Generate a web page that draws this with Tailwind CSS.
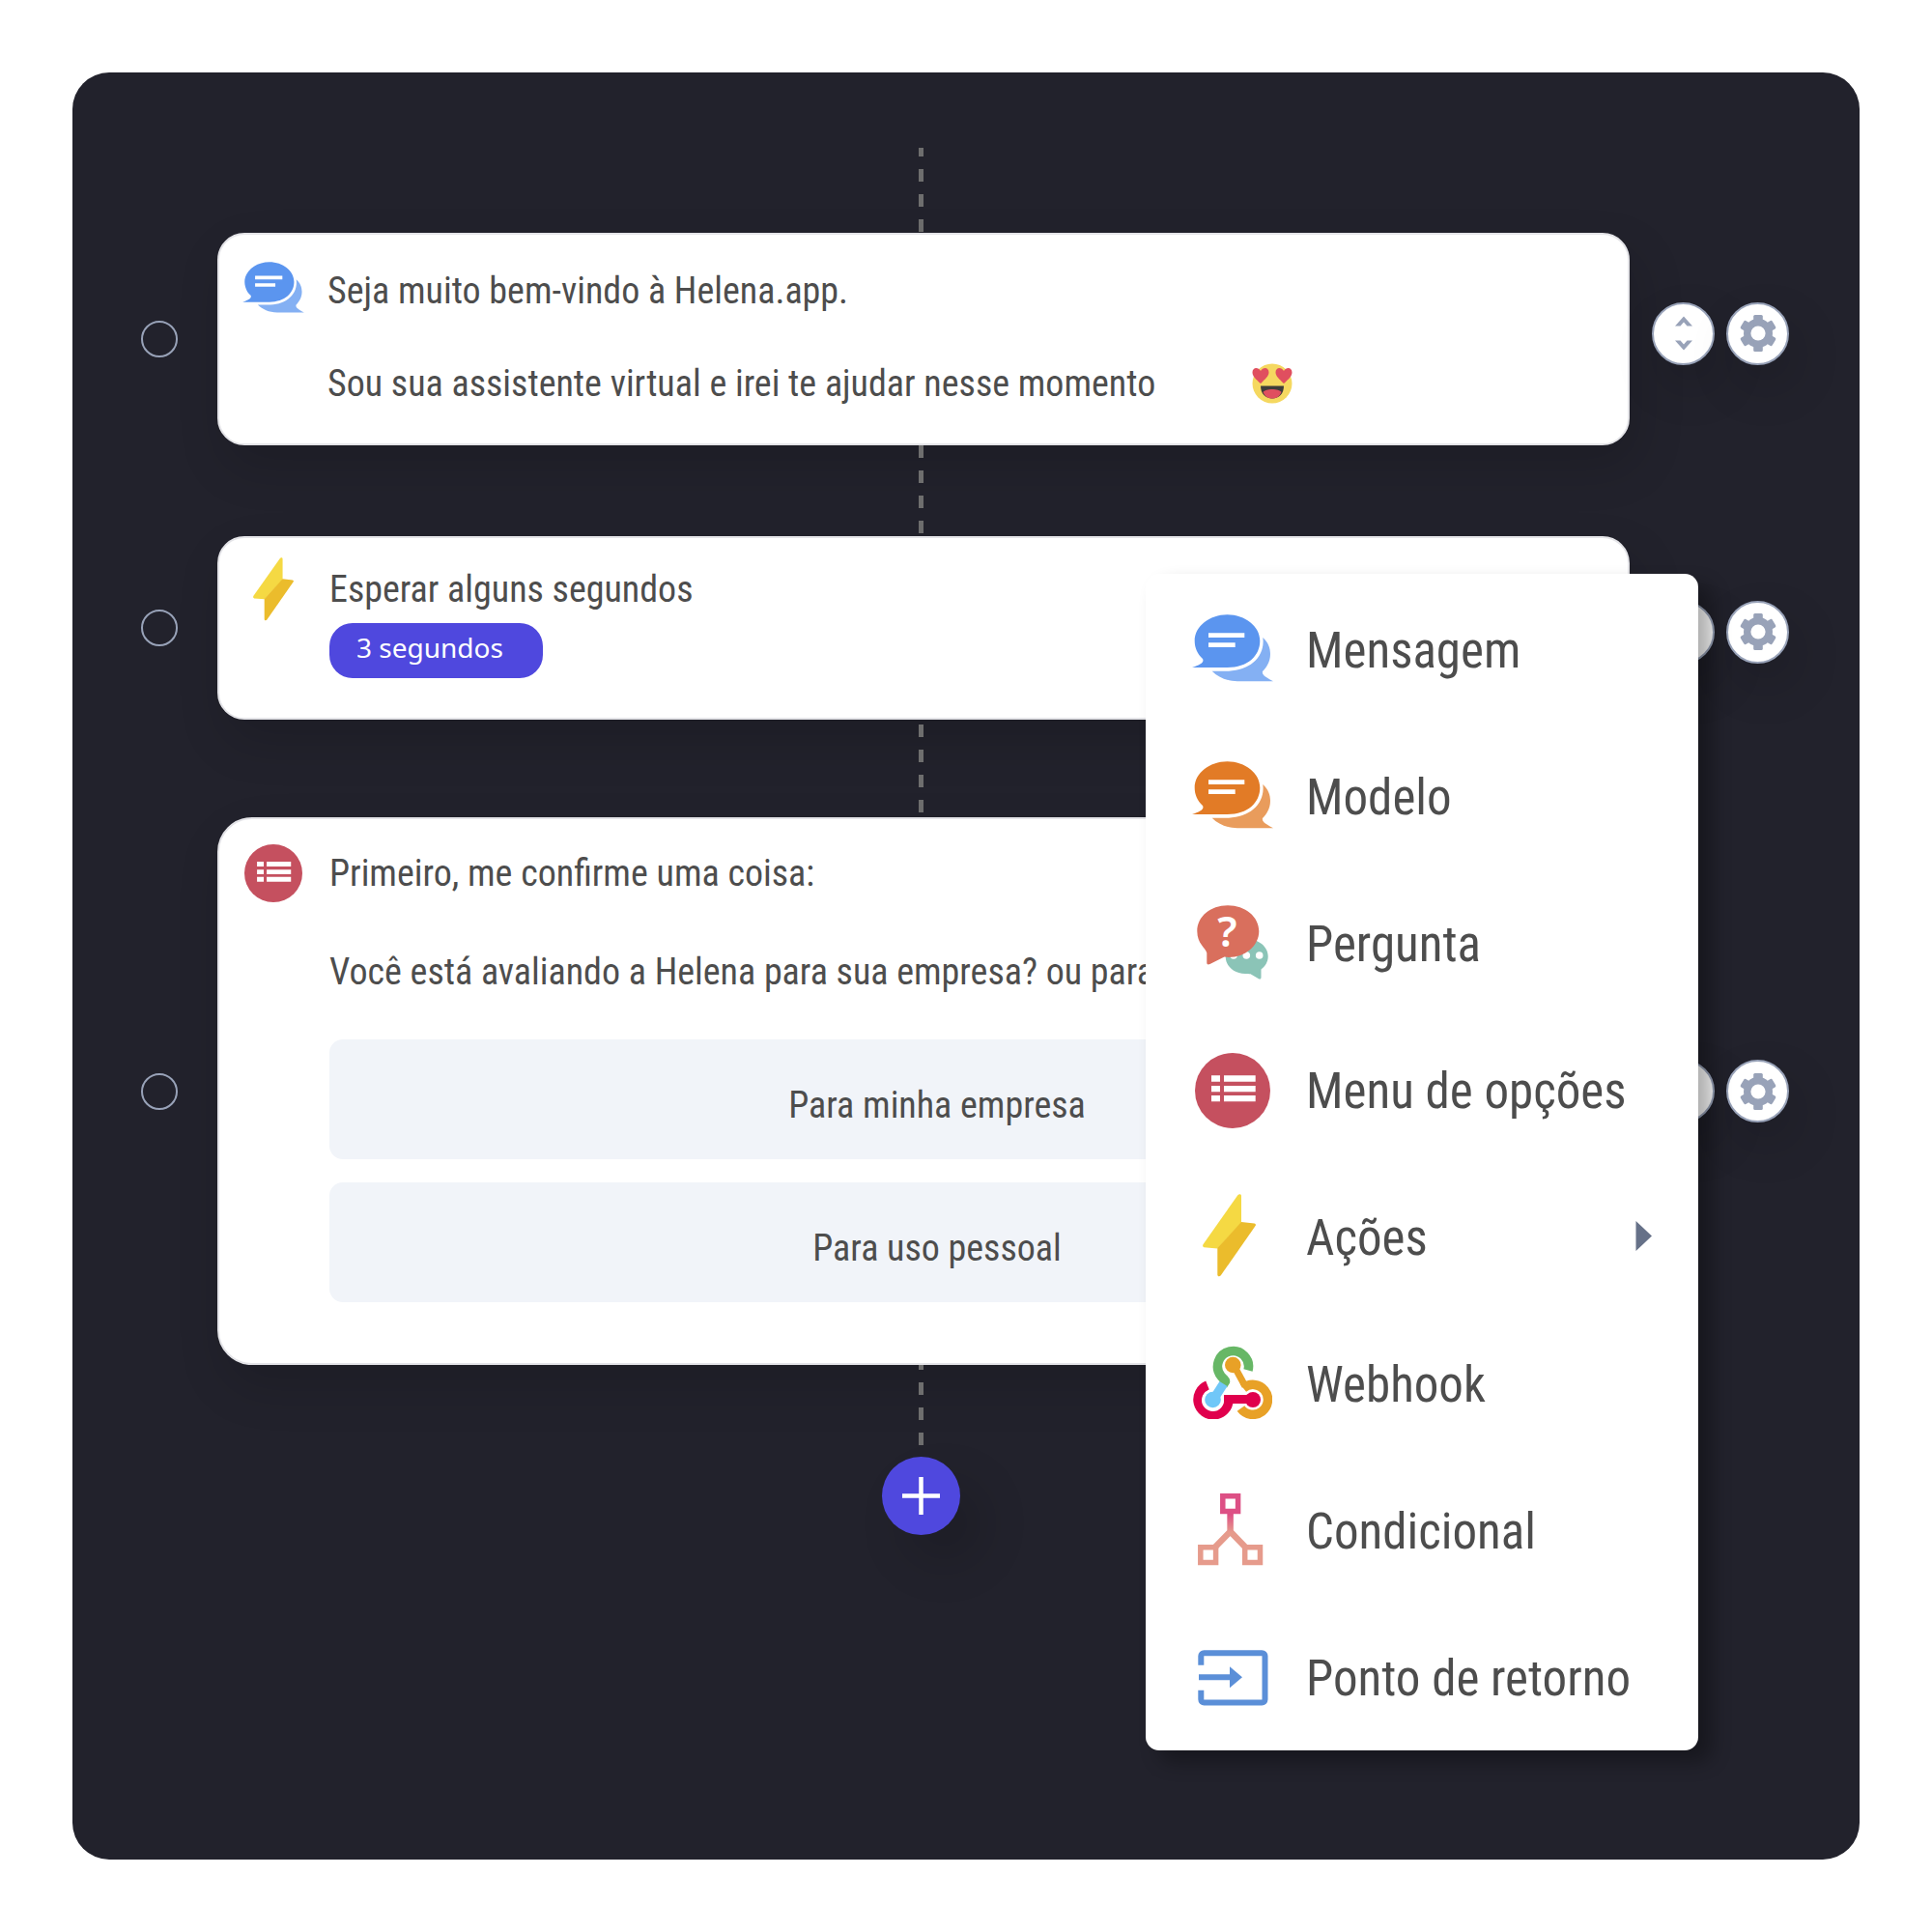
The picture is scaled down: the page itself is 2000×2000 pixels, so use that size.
<!DOCTYPE html>
<html lang="pt-BR">
<head>
<meta charset="utf-8">
<meta name="viewport" content="width=device-width, initial-scale=1">
<title>Helena.app – Fluxo do chatbot</title>
<script src="https://cdn.jsdelivr.net/npm/@tailwindcss/browser@4"></script>
</head>
<body class="flex min-h-screen bg-white p-[75px] font-['Roboto_Condensed','Liberation_Sans',sans-serif] text-[#4d4d4d]">

<svg class="hidden" aria-hidden="true">
  <symbol id="chat" viewBox="0 0 84 70">
    <path fill="currentColor" opacity=".75" d="M73.3 24C79 29 81 35 81 41C81 49 77 55 73 59C72 63 77 65 84 69.3H47C36 69 27 65 20.7 58.7H38C60 58 76 44 73.3 24Z"/>
    <path fill="currentColor" d="M36.5 .3C55 .3 70.3 12.5 70.3 27.5S58 55 36.5 55H0C8 52 13 50 11 46C5.500 41 2.700 34.500 2.700 27.500C2.700 12.500 18 .3 36.500 .3Z"/>
    <path fill="#fff" d="M17 19.300h37.300v4.700H17zM17 29.300h27.700v4.700H17z"/>
  </symbol>
  <symbol id="bolt" viewBox="0 0 55 86">
    <path fill="#f5d943" d="M36.500 1C38 -.3 40 0 40 2V30L15.300 56.500L1.500 55.300C0 55 -.3 53.500 .6 52Z"/>
    <path fill="#ebbc2c" d="M40 29L53.500 30.400C55 30.700 55.300 32 54.400 33.300L18.800 84.300C17.500 86 15.300 85.500 15.300 83.500V56Z"/>
  </symbol>
  <symbol id="list" viewBox="0 0 78 78">
    <circle cx="39" cy="39" r="39" fill="#c5505f"/>
    <path fill="#fff" d="M17 23.300h9v6.500h-9zM30 23.300h32.700v6.500H30zM17 34h9v6.300h-9zM30 34h32.700v6.300H30zM17 44h9v6.300h-9zM30 44h32.700v6.300H30z"/>
  </symbol>
  <symbol id="gear" viewBox="0 0 38 38">
    <g fill="#98a2b8">
      <circle cx="19" cy="19" r="15"/>
      <rect x="14.200" y="0" width="9.600" height="38" rx="1.500"/>
      <rect x="14.200" y="0" width="9.600" height="38" rx="1.500" transform="rotate(60 19 19)"/>
      <rect x="14.200" y="0" width="9.600" height="38" rx="1.500" transform="rotate(120 19 19)"/>
    </g>
    <circle cx="19" cy="19" r="7.600" fill="#fff"/>
  </symbol>
  <symbol id="expand" viewBox="0 0 18 36">
    <path fill="#98a2b8" d="M0 10.500L9 .5L18 10.500H12.500L9 6.500L5.500 10.500ZM0 25.500H5.500L9 29.500L12.500 25.500H18L9 35.500Z"/>
  </symbol>
</svg>

<main class="relative flex-1 rounded-[38px] bg-[#22222c] pt-[78px] pr-[73px] pb-[100px] pl-[71px]">
  <div class="grid grid-cols-[38px_1fr_142px] items-center gap-x-[41px]">

    <div class="col-start-2 flex justify-center pb-px pl-3">
      <span class="h-[87px] w-[5px] bg-[repeating-linear-gradient(to_top,#6e6e6e_0_13px,transparent_13px_26px)]"></span>
    </div>

    <input type="radio" name="step" aria-label="Selecionar mensagem" class="col-start-1 size-[38px] appearance-none rounded-full border-2 border-[#98a2b8]">
    <section class="-mr-[18px] flex gap-[24px] rounded-[28px] border-2 border-[#e4e4e8] bg-white pt-[34px] pr-[86px] pb-[38px] pl-[24px] shadow-[8px_22px_50px_rgba(0,0,0,0.15)]">
      <div class="flex h-12 w-16 shrink-0 items-center justify-center pb-2 text-[#5b95ef]">
        <svg class="h-[53px] w-16 shrink-0"><use href="#chat"/></svg>
      </div>
      <div class="flex-1 text-[38px] leading-[48px]">
        <p>Seja muito bem-vindo à Helena.app.</p>
        <p class="mt-12 flex items-center gap-[100px]">Sou sua assistente virtual e irei te ajudar nesse momento
          <svg class="size-[42px] shrink-0" viewBox="0 0 42 42" role="img" aria-label="Apaixonado">
            <circle cx="21" cy="21" r="20.500" fill="#f5d860"/>
            <path fill="#e04f5f" d="M9 21C4 16.500 .5 13.500 .5 9.500C.5 4 6.500 3.500 9 8C11.500 3.500 17.500 4 17.500 9.500C17.500 13.500 13.500 16.500 9 21ZM33 21C28.500 16.500 24.500 13.500 24.500 9.500C24.500 4 30.500 3.500 33 8C35.500 3.500 41.500 4 41.500 9.500C41.500 13.500 38 16.500 33 21Z"/>
            <path fill="#3e3c3a" d="M9 23.500H33C33 31.500 28 36.500 21 36.500S9 31.500 9 23.500Z"/>
            <path fill="#e04f5f" d="M11.500 30C14 26 28 26 30.500 30C28.500 34.500 25.500 36.500 21 36.500S13.500 34.500 11.500 30Z"/>
          </svg>
        </p>
      </div>
    </section>
    <div class="flex justify-end gap-3 pb-3">
      <button type="button" aria-label="Recolher" class="flex size-[65px] items-center justify-center rounded-full border-2 border-[#98a2b8] bg-white shadow-[8px_22px_50px_rgba(0,0,0,0.15)]"><svg class="h-9 w-[18px]"><use href="#expand"/></svg></button>
      <button type="button" aria-label="Configurar" class="flex size-[65px] items-center justify-center rounded-full border-2 border-[#98a2b8] bg-white shadow-[8px_22px_50px_rgba(0,0,0,0.15)]"><svg class="size-[38px]"><use href="#gear"/></svg></button>
    </div>

    <div class="col-start-2 flex h-[94px] items-start justify-center pl-3">
      <span class="h-[91px] w-[5px] bg-[repeating-linear-gradient(to_bottom,#6e6e6e_0_13px,transparent_13px_26px)]"></span>
    </div>

    <input type="radio" name="step" aria-label="Selecionar espera" class="col-start-1 size-[38px] appearance-none rounded-full border-2 border-[#98a2b8]">
    <section class="-mr-[18px] flex gap-[26px] rounded-[28px] border-2 border-[#e4e4e8] bg-white pt-[29px] pr-[86px] pb-[41px] pl-[24px] shadow-[8px_22px_50px_rgba(0,0,0,0.15)]">
      <div class="flex h-12 w-16 shrink-0 items-center justify-center">
        <svg class="h-[66px] w-[42px] shrink-0"><use href="#bolt"/></svg>
      </div>
      <div class="flex-1 text-[38px] leading-[48px]">
        <p>Esperar alguns segundos</p>
        <span class="mt-[11px] flex h-[57px] w-[221px] items-center rounded-3xl bg-[#4f48de] pb-2 pl-[28px] font-['Noto_Sans',sans-serif] text-[28px] leading-9 text-white">3 segundos</span>
      </div>
    </section>
    <div class="flex justify-end gap-3 pt-2">
      <button type="button" aria-label="Recolher" class="flex size-[65px] items-center justify-center rounded-full border-2 border-[#98a2b8] bg-white shadow-[8px_22px_50px_rgba(0,0,0,0.15)]"><svg class="h-9 w-[18px]"><use href="#expand"/></svg></button>
      <button type="button" aria-label="Configurar" class="flex size-[65px] items-center justify-center rounded-full border-2 border-[#98a2b8] bg-white shadow-[8px_22px_50px_rgba(0,0,0,0.15)]"><svg class="size-[38px]"><use href="#gear"/></svg></button>
    </div>

    <div class="col-start-2 flex h-[101px] items-center justify-center pl-3">
      <span class="h-[92px] w-[5px] bg-[repeating-linear-gradient(to_bottom,#6e6e6e_0_13px,transparent_13px_26px)]"></span>
    </div>

    <input type="radio" name="step" aria-label="Selecionar menu de opções" class="col-start-1 size-[38px] appearance-none rounded-full border-2 border-[#98a2b8]">
    <section class="-mr-[18px] flex gap-[26px] rounded-[36px] border-2 border-[#e4e4e8] bg-white pt-[32px] pr-[86px] pb-[63px] pl-[24px] shadow-[8px_22px_50px_rgba(0,0,0,0.15)]">
      <div class="flex h-12 w-16 shrink-0 items-center justify-center">
        <svg class="size-[60px] shrink-0"><use href="#list"/></svg>
      </div>
      <div class="min-w-0 flex-1 text-[38px] leading-[48px]">
        <p>Primeiro, me confirme uma coisa:</p>
        <p class="mt-[54px]">Você está avaliando a Helena para sua empresa? ou para</p>
        <div class="mt-[46px] grid gap-[24px]">
          <button type="button" class="h-[124px] rounded-[14px] bg-[#f1f4f9] pt-3">Para minha empresa</button>
          <button type="button" class="h-[124px] rounded-[14px] bg-[#f1f4f9] pt-3">Para uso pessoal</button>
        </div>
      </div>
    </section>
    <div class="flex justify-end gap-3">
      <button type="button" aria-label="Recolher" class="flex size-[65px] items-center justify-center rounded-full border-2 border-[#98a2b8] bg-white shadow-[8px_22px_50px_rgba(0,0,0,0.15)]"><svg class="h-9 w-[18px]"><use href="#expand"/></svg></button>
      <button type="button" aria-label="Configurar" class="flex size-[65px] items-center justify-center rounded-full border-2 border-[#98a2b8] bg-white shadow-[8px_22px_50px_rgba(0,0,0,0.15)]"><svg class="size-[38px]"><use href="#gear"/></svg></button>
    </div>

    <div class="col-start-2 flex flex-col items-center gap-3 pl-3">
      <span class="h-[83px] w-[5px] bg-[repeating-linear-gradient(to_top,#6e6e6e_0_13px,transparent_13px_26px)]"></span>
      <button type="button" aria-label="Adicionar" class="flex size-[81px] items-center justify-center rounded-full bg-[#4f48de] shadow-[24px_28px_50px_rgba(0,0,0,0.15)]">
        <svg class="size-[39px]" viewBox="0 0 39 39" stroke="#fff" stroke-width="4.500"><path d="M19.500 0V39M0 19.500H39"/></svg>
      </button>
    </div>
  </div>

  <nav aria-label="Adicionar etapa" class="absolute top-[519px] right-[167px] w-[572px] rounded-[14px] bg-white pt-px pb-px shadow-[14px_12px_20px_rgba(0,0,0,0.32)]">
    <ul class="text-[51px] leading-[64px]">
      <li><button type="button" class="flex h-[152px] w-full items-center gap-[32px] pl-[46px] text-left">
        <span class="flex w-[88px] justify-center text-[#5b95ef]"><svg class="h-[70px] w-[84px]"><use href="#chat"/></svg></span><span class="pt-1.5">Mensagem</span></button></li>
      <li><button type="button" class="flex h-[152px] w-full items-center gap-[32px] pl-[46px] text-left">
        <span class="flex w-[88px] justify-center text-[#e27b26]"><svg class="h-[70px] w-[84px]"><use href="#chat"/></svg></span><span class="pt-1.5">Modelo</span></button></li>
      <li><button type="button" class="flex h-[152px] w-full items-center gap-[32px] pl-[46px] text-left">
        <span class="flex w-[88px] justify-center">
          <svg class="h-[77px] w-[74px] overflow-visible" viewBox="0 0 74 77">
            <path fill="#8bc4b7" d="M52 35.300C64 35.300 73.700 43 73.700 53C73.700 59 70.500 63.500 66.500 66.500V74.500C66.500 76.500 65.500 77 64 76.200L55.500 71.300C54 71 52 71 50 71C38 71 29.700 63 29.700 53S40 35.300 52 35.300Z"/>
            <circle cx="38" cy="52" r="3.800" fill="#fff"/><circle cx="51.300" cy="52" r="3.800" fill="#fff"/><circle cx="64.700" cy="52" r="3.800" fill="#fff"/>
            <path fill="#d96f5d" d="M32 .3C50 .3 64.300 12 64.300 27S50 54 33 54C31.500 54 30 54 28.500 53.600L13.500 61C11.500 62 10.300 61.500 10.300 59.500V49.500C9 44 .3 40 .3 27C.3 12 14 .3 32 .3Z"/>
            <text x="31.500" y="43" text-anchor="middle" fill="#fff" class="font-['Noto_Sans',sans-serif] text-[44px] font-semibold">?</text>
          </svg></span><span class="pt-1.5">Pergunta</span></button></li>
      <li><button type="button" class="flex h-[152px] w-full items-center gap-[32px] pl-[46px] text-left">
        <span class="flex w-[88px] justify-center pt-1"><svg class="size-[78px]"><use href="#list"/></svg></span><span class="pt-1.5">Menu de opções</span></button></li>
      <li><button type="button" aria-haspopup="menu" class="flex h-[152px] w-full items-center gap-[32px] pl-[46px] text-left">
        <span class="flex w-[88px] justify-center pr-2"><svg class="h-[86px] w-[55px]"><use href="#bolt"/></svg></span><span class="pt-1.5">Ações</span>
        <svg class="mr-[48px] ml-auto h-[31px] w-[17px]" viewBox="0 0 17 31"><path fill="#667188" d="M.5 0L17 15.500L.5 31Z"/></svg></button></li>
      <li><button type="button" class="flex h-[152px] w-full items-center gap-[32px] pl-[46px] text-left">
        <span class="flex w-[88px] justify-center">
          <svg class="h-[76px] w-[82px]" viewBox="0 0 82 76" fill="none">
            <path stroke="#67b766" stroke-width="9.500" d="M57 25.500A16 16 0 1 0 29 31.500C31 34 34 35.500 33.500 37L31 41"/>
            <path stroke="#e8a127" stroke-width="7" d="M42 20L54 42"/>
            <path stroke="#e8a127" stroke-width="9.500" d="M52 44A15.500 15.500 0 1 1 49.500 65"/>
            <path stroke="#e0004d" stroke-width="9.500" d="M15 41A16 16 0 1 0 37 56.500"/>
            <path stroke="#e0004d" stroke-width="9" d="M32 55.500H62"/>
            <path fill="#fff" d="M21 45A11.500 11.500 0 1 0 32 56V50L25 50Z"/>
            <path stroke="#70c7f8" stroke-width="9.500" d="M31.500 39.500L21 56"/>
            <circle cx="20.500" cy="56" r="8.300" fill="#70c7f8"/>
            <circle cx="41.300" cy="20" r="8.300" fill="#e8a127"/>
            <circle cx="62" cy="56" r="8" fill="#e0004d"/>
          </svg></span><span class="pt-1.5">Webhook</span></button></li>
      <li><button type="button" class="flex h-[152px] w-full items-center gap-[32px] pl-[46px] text-left">
        <span class="flex w-[88px] justify-center pr-1">
          <svg class="h-[75px] w-[68px]" viewBox="0 0 68 75" fill="none">
            <defs><linearGradient id="stem" gradientUnits="userSpaceOnUse" x1="0" y1="22" x2="0" y2="40"><stop stop-color="#dd5085"/><stop offset="1" stop-color="#e69b8c"/></linearGradient></defs>
            <path stroke="url(#stem)" stroke-width="6.500" d="M33.600 20V40M15.500 58L33.600 39.500L51.500 58"/>
            <path stroke="#dd5085" stroke-width="5.500" fill="#fff" d="M25.800 2.800h15.800v15.800H25.800z"/>
            <path stroke="#e69b8c" stroke-width="5.500" fill="#fff" d="M2.800 55.800h15.800v15.800H2.800zM48.700 55.800h15.800v15.800H48.700z"/>
          </svg></span><span class="pt-1.5">Condicional</span></button></li>
      <li><button type="button" class="flex h-[152px] w-full items-center gap-[32px] pl-[46px] text-left">
        <span class="flex w-[88px] justify-center pt-1">
          <svg class="h-[58px] w-[73px]" viewBox="0 0 73 58">
            <path fill="none" stroke="#5b8fd8" stroke-width="6" d="M3.300 15.700V6.500A3.200 3.200 0 0 1 6.500 3.200H66.300A3.200 3.200 0 0 1 69.500 6.500V51.300A3.200 3.200 0 0 1 66.300 54.500H6.500A3.200 3.200 0 0 1 3.300 51.300V41.700"/>
            <path fill="#5b8fd8" d="M1 25.300H33V17.300L46 28.300L33 39.300V31.300H1Z"/>
          </svg></span><span class="pt-1.5">Ponto de retorno</span></button></li>
    </ul>
  </nav>
</main>
</body>
</html>
